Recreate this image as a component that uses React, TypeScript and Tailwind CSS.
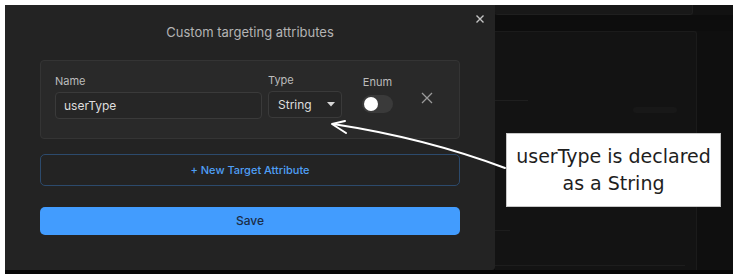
import React from "react";

export default function App() {
  return (
    <div className="relative w-[739px] h-[280px] bg-white pt-[5px] pl-[5px] font-['Inter',sans-serif]">
      <div className="w-[728px] h-[269px] flex flex-col bg-[#0b0b0b]">
        <div className="flex h-[265px]">
          {/* Modal */}
          <div className="w-[490px] h-full bg-[#232323] rounded-br-[3px] flex flex-col px-[35px] relative">
            <div className="absolute left-[471px] top-[10px]">
              <svg width="8" height="8" viewBox="0 0 8 8">
                <path d="M0.5 0.5 L7.5 7.5 M7.5 0.5 L0.5 7.5" stroke="#c4c4c4" strokeWidth="1.4" />
              </svg>
            </div>
            <div className="pt-[19px] text-center text-[13px] leading-[16px] text-[#b4b4b4]">
              Custom targeting attributes
            </div>
            <div className="mt-[20px] h-[79px] bg-[#292929] border border-[#343434] rounded-[4px] px-[14px] pt-[13px] flex gap-[6px]">
              <div className="w-[207px] flex flex-col gap-[4px]">
                <div className="text-[11px] leading-[14px] text-[#bcbcbc]">Name</div>
                <div className="h-[27px] rounded-[4px] border border-[#3a3a3a] bg-[#262626] flex items-center px-[8px] text-[12px] text-[#dedede]">
                  userType
                </div>
              </div>
              <div className="w-[74px] flex flex-col gap-[4px]">
                <div className="text-[11px] leading-[13px] text-[#bcbcbc]">Type</div>
                <div className="h-[27px] rounded-[4px] border border-[#3a3a3a] bg-[#262626] flex items-center justify-between pl-[9px] pr-[6px] text-[12px] text-[#dedede]">
                  <span>String</span>
                  <svg width="8" height="5" viewBox="0 0 8 5"><path d="M0 0 L8 0 L4 4.5 Z" fill="#d6d6d6" /></svg>
                </div>
              </div>
              <div className="ml-[14px] w-[31px] flex flex-col items-center gap-[6px] pt-[2px]">
                <div className="text-[11px] leading-[13px] text-[#bcbcbc]">Enum</div>
                <div className="w-[31px] h-[18px] rounded-full bg-[#3a3a3a] flex items-center px-[2px]">
                  <div className="w-[14px] h-[14px] rounded-full bg-white" />
                </div>
              </div>
              <div className="ml-[22px] pt-[18px]">
                <svg width="12" height="12" viewBox="0 0 12 12">
                  <path d="M1 1 L11 11 M11 1 L1 11" stroke="#9a9a9a" strokeWidth="1.3" />
                </svg>
              </div>
            </div>
            <div className="mt-[15px] h-[32px] rounded-[5px] border border-[#2c4a6c] flex items-center justify-center text-[11px] font-medium text-[#4f9ff5]">
              + New Target Attribute
            </div>
            <div className="mt-[21px] h-[28px] rounded-[5px] bg-[#429cfe] flex items-center justify-center text-[12px] font-medium text-[#1c2d46]">
              Save
            </div>
          </div>
          {/* Background app */}
          <div className="flex-1 flex flex-col bg-[#121212]">
            <div className="h-[10px] bg-[#181818] mr-[40px] rounded-b-[3px] border-b border-r border-[#1f1f1f]" />
            <div className="h-[16px] bg-[#0d0d0d]" />
            <div className="flex-1 flex">
              <div className="flex-1 bg-[#131313] border-r border-t border-[#1b1b1b] rounded-tr-[3px] flex flex-col">
                <div className="mt-[68px] w-[33px] h-px bg-[#1f1f1f]" />
                <div className="mt-[6px] ml-[138px] w-[44px] h-[6px] rounded-[3px] bg-[#181818]" />
                <div className="mt-[117px] w-[15px] h-px bg-[#1d1d1d]" />
                <div className="mt-[34px] w-[190px] h-px bg-[#1d1d1d]" />
              </div>
              <div className="w-[36px] bg-[#0f0f0f]" />
            </div>
          </div>
        </div>
        <div className="flex-1 bg-[#080808]" />
      </div>

      {/* Arrow annotation */}
      <svg className="absolute left-0 top-0 pointer-events-none" width="739" height="280" viewBox="0 0 739 280">
        <path d="M505 168 Q425 138 333 124" stroke="#ffffff" strokeWidth="2" fill="none" strokeLinecap="round" />
        <path d="M345 121 L332 124 L346 133" stroke="#ffffff" strokeWidth="2" fill="none" strokeLinecap="round" strokeLinejoin="round" />
      </svg>

      {/* Callout */}
      <div className="absolute left-[506px] top-[133px] w-[215px] h-[74px] bg-white border border-[#c8c8c8] flex flex-col items-center justify-center text-[19px] leading-[27px] text-[#1e1e1e] font-['DejaVu_Sans',sans-serif]">
        <div>userType is declared</div>
        <div>as a String</div>
      </div>
    </div>
  );
}
